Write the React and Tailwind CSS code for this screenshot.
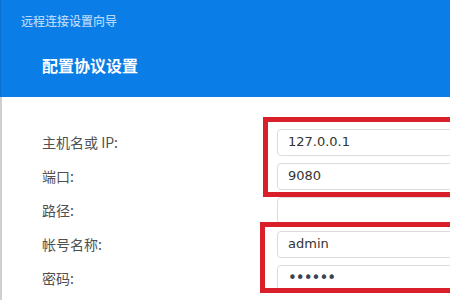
import React from 'react';

const rows = [
  { label: '主机名或 IP:', value: '127.0.0.1' },
  { label: '端口:', value: '9080' },
  { label: '路径:', value: '' },
  { label: '帐号名称:', value: 'admin' },
  { label: '密码:', value: '••••••', secret: true },
];

const App = () => {
  return (
    <div className="relative w-[450px] h-[300px] overflow-hidden bg-white font-['Noto_Sans_CJK_SC',sans-serif]">
      {/* header */}
      <div className="h-[97px] bg-[#0a7de6] border-l border-[#0a6fd0] pt-[13px]">
        <div className="pl-[20px] text-[12px] leading-[16px] font-medium text-[#b3d8fa]">远程连接设置向导</div>
        <div className="pl-[41px] mt-[28px] text-[16px] leading-[16px] font-bold text-white">配置协议设置</div>
      </div>

      {/* form */}
      <div className="h-[203px] border-l-2 border-[#cfcfcf] pt-[28px] overflow-hidden">
        {rows.map((row) => (
          <div key={row.label} className="flex items-center h-[34px]">
            <div className="w-[275px] shrink-0 pl-[40px] text-[14px] text-[#505050]">{row.label}</div>
            <div className="flex items-center h-[27px] w-[260px] shrink-0 border border-[#dcdcdc] rounded-[4px] bg-white pl-[10px] text-[13px] text-[#333] font-['DejaVu_Sans',sans-serif]">
              {row.secret ? (
                <span className="text-[15px] tracking-[-1px] text-[#3d4250]">{row.value}</span>
              ) : (
                row.value
              )}
            </div>
          </div>
        ))}
      </div>

      {/* annotation boxes */}
      <div className="absolute left-[263px] top-[117px] w-[260px] h-[80px] border-[5px] border-[#d9202a]" />
      <div className="absolute left-[260px] top-[222px] w-[260px] h-[71px] border-[5px] border-[#d9202a]" />
    </div>
  );
};

export default App;
